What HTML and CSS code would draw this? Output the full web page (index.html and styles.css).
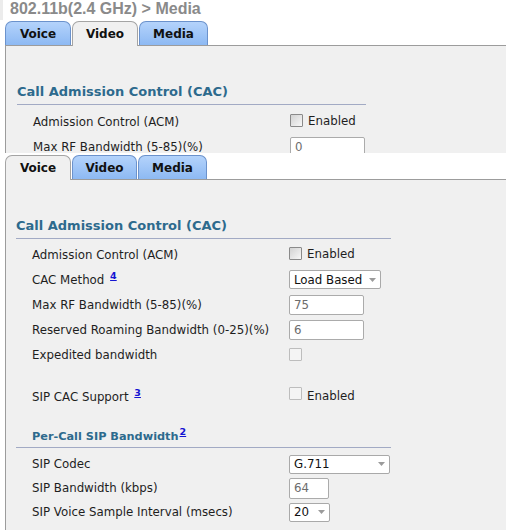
FILE: index.html
```html
<!DOCTYPE html>
<html>
<head>
<meta charset="utf-8">
<link rel="stylesheet" href="styles.css">
</head>
<body>
<div class="screen screen-top">
  <div class="title">802.11b(2.4 GHz) &gt; Media</div>
  <div class="tabs">
    <div class="tab">Voice</div>
    <div class="tab active">Video</div>
    <div class="tab tab-wide">Media</div>
  </div>
  <div class="panel">
    <div class="form form-narrow">
      <div class="heading">Call Admission Control (CAC)</div>
      <div class="rows rows-top">
        <div class="row">
          <div class="label">Admission Control (ACM)</div>
          <span class="cb"></span><span class="enabled">Enabled</span>
        </div>
        <div class="row">
          <div class="label">Max RF Bandwidth (5-85)(%)</div>
          <div class="inp">0</div>
        </div>
      </div>
    </div>
  </div>
</div>
<div class="screen screen-bottom">
  <div class="tabs">
    <div class="tab active">Voice</div>
    <div class="tab tab-mid">Video</div>
    <div class="tab tab-wide">Media</div>
  </div>
  <div class="panel">
    <div class="form">
      <div class="heading">Call Admission Control (CAC)</div>
      <div class="rows">
        <div class="row">
          <div class="label">Admission Control (ACM)</div>
          <span class="cb"></span><span class="enabled">Enabled</span>
        </div>
        <div class="row">
          <div class="label">CAC Method <a class="ref">4</a></div>
          <div class="sel sel-load"><span>Load Based</span><svg class="arrow" width="7" height="4" viewBox="0 0 7 4"><path d="M0 0H7L3.5 4Z"/></svg></div>
        </div>
        <div class="row">
          <div class="label">Max RF Bandwidth (5-85)(%)</div>
          <div class="inp">75</div>
        </div>
        <div class="row">
          <div class="label">Reserved Roaming Bandwidth (0-25)(%)</div>
          <div class="inp">6</div>
        </div>
        <div class="row">
          <div class="label">Expedited bandwidth</div>
          <span class="cb dis"></span>
        </div>
        <div class="spacer"></div>
        <div class="row">
          <div class="label">SIP CAC Support <a class="ref">3</a></div>
          <span class="cb dis raised"></span><span class="enabled">Enabled</span>
        </div>
      </div>
      <div class="heading sub">Per-Call SIP Bandwidth<a class="ref ref-h">2</a></div>
      <div class="rows rows-sip">
        <div class="row row-s">
          <div class="label">SIP Codec</div>
          <div class="sel sel-codec"><span>G.711</span><svg class="arrow" width="7" height="4" viewBox="0 0 7 4"><path d="M0 0H7L3.5 4Z"/></svg></div>
        </div>
        <div class="row row-s">
          <div class="label">SIP Bandwidth (kbps)</div>
          <div class="inp inp-small">64</div>
        </div>
        <div class="row row-s">
          <div class="label">SIP Voice Sample Interval (msecs)</div>
          <div class="sel sel-small"><span>20</span><svg class="arrow" width="7" height="4" viewBox="0 0 7 4"><path d="M0 0H7L3.5 4Z"/></svg></div>
        </div>
      </div>
    </div>
  </div>
</div>
</body>
</html>
```
FILE: styles.css
```css
* { box-sizing: border-box; }
html, body { margin: 0; padding: 0; background: #fff; }
body {
  width: 506px;
  height: 530px;
  overflow: hidden;
  font-family: "DejaVu Sans", Verdana, sans-serif;
  color: #1e1e1e;
}
.screen { background: #fff; overflow: hidden; display: flex; flex-direction: column; }
.screen-top { height: 153px; flex: none; }
.screen-bottom { height: 377px; flex: none; }
.title {
  flex: none;
  display: flex;
  font-family: "Liberation Sans", Arial, sans-serif;
  font-weight: bold;
  font-size: 16px;
  line-height: 18px;
  height: 21px;
  color: #8a8a8a;
}
.title::before {
  content: "";
  width: 3px;
  height: 20px;
  margin-right: 7px;
  background: #ececec;
}
.tabs {
  display: flex;
  gap: 1px;
  padding-left: 5px;
  height: 24px;
  flex: none;
  position: relative;
  z-index: 1;
}
.screen-bottom .tabs { margin-top: 2px; }
.tab {
  width: 66px;
  height: 24px;
  border: 1px solid #6b92cc;
  border-bottom: none;
  border-radius: 7px 7px 0 0;
  background: linear-gradient(#b4d3fb, #8db9f3);
  font-weight: bold;
  font-size: 12px;
  color: #111;
  display: flex;
  align-items: center;
  justify-content: center;
}
.tab-mid { width: 65px; }
.tab-wide { width: 69px; }
.tab.active {
  background: #f0f0f0;
  border-color: #a4a4a4;
  height: 25px;
  padding-bottom: 1px;
}
.panel {
  flex: 1 0 auto;
  background: #f0f0f0;
  border-top: 1px solid #9c9c9c;
  border-left: 1px solid #9c9c9c;
  margin-left: 5px;
  padding-left: 10px;
}
.screen-top .panel { padding-left: 11px; }
.form { width: 375px; }
.form-narrow { width: 349px; }
.heading {
  font-weight: bold;
  font-size: 13px;
  line-height: 16px;
  color: #2d6a8d;
  padding-top: 38px;
  padding-bottom: 4px;
  border-bottom: 1px solid #a2aac4;
}
.heading.sub {
  font-size: 11.3px;
  line-height: 14px;
  height: 39px;
  padding-left: 16px;
  padding-top: 21px;
  padding-bottom: 3px;
}
.rows { padding-top: 3px; }
.rows-top { padding-top: 4px; }
.rows-sip { padding-top: 4px; }
.row {
  display: flex;
  align-items: center;
  height: 25px;
  font-size: 11.8px;
}
.row-s { height: 24px; }
.spacer { height: 17px; }
.label {
  width: 273px;
  flex: none;
  padding-left: 16px;
  white-space: nowrap;
}
.ref {
  font-size: 9.5px;
  font-weight: bold;
  line-height: 0;
  color: #1414d2;
  text-decoration: underline;
  vertical-align: 5px;
  margin-left: 2px;
}
.ref-h { margin-left: 1px; }
.cb {
  width: 13px;
  height: 13px;
  flex: none;
  border: 1px solid #8a8a8a;
  border-radius: 1px;
  background: linear-gradient(135deg, #d2d2d2, #f8f8f8);
  margin-bottom: 2px;
}
.cb.dis {
  border-color: #bdbdbd;
  background: #f4f4f4;
  margin-bottom: 1px;
}
.cb.raised { margin-bottom: 6px; }
.enabled { margin-left: 5px; margin-bottom: 1px; }
.inp {
  width: 75px;
  height: 20px;
  border: 1px solid #ababab;
  border-radius: 2px;
  background: #fff;
  padding-left: 4px;
  color: #6c6c6c;
  display: flex;
  align-items: center;
}
.inp-small { width: 40px; height: 21px; }
.sel {
  height: 19px;
  border: 1px solid #a9a9a9;
  border-radius: 2px;
  background: #fff;
  padding-left: 4px;
  padding-right: 4px;
  color: #111;
  display: flex;
  align-items: center;
}
.sel-load { width: 92px; }
.sel-codec { width: 101px; }
.sel-small { width: 41px; }
.arrow { margin-left: auto; fill: #9b9b9b; flex: none; }
```
